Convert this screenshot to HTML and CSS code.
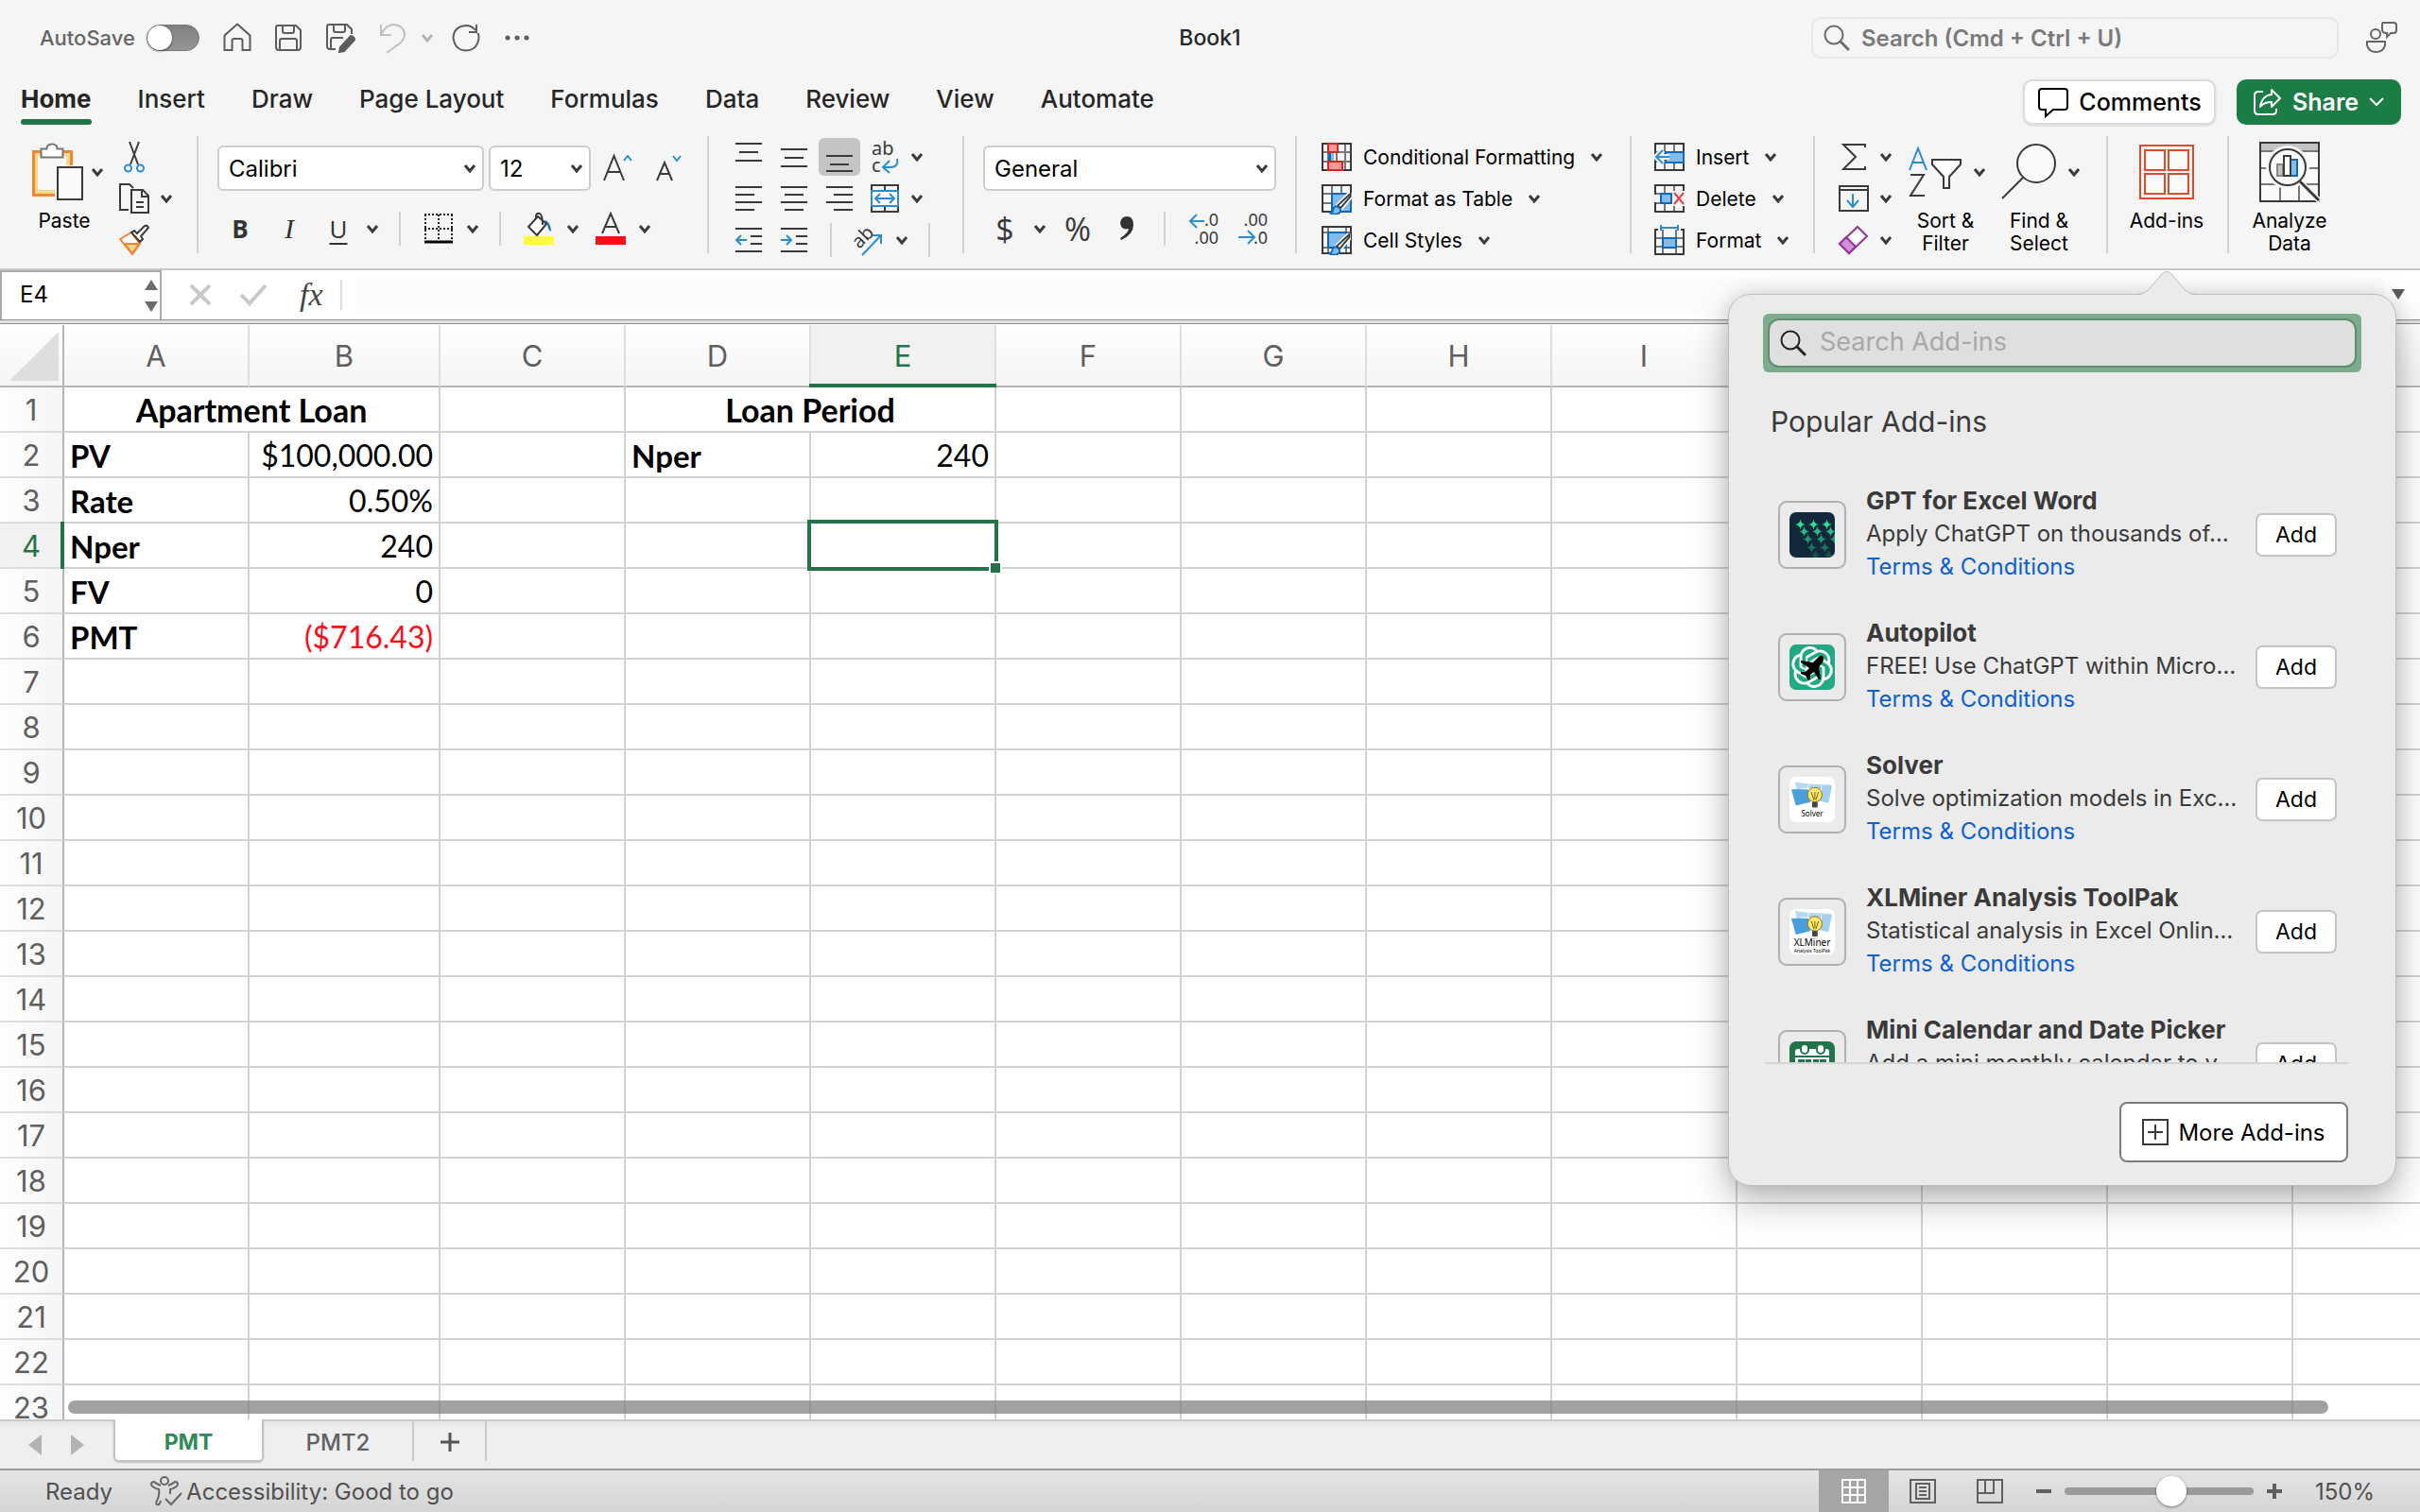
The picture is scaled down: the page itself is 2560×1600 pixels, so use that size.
FILE: index.html
```html
<!DOCTYPE html>
<html lang="en">
<head>
<meta charset="utf-8">
<title>Book1</title>
<link rel="stylesheet" href="styles.css">
</head>
<body>
<svg class="defs" aria-hidden="true">
  <symbol id="chev" viewBox="0 0 14 10"><path d="M2 2l5 6 5-6" fill="none" stroke="currentColor" stroke-width="3"/></symbol>
  <symbol id="lens" viewBox="0 0 28 28"><circle cx="11" cy="11" r="9.500" fill="none" stroke="currentColor" stroke-width="2"/><path d="M18 18l8 8" stroke="currentColor" stroke-width="3" stroke-linecap="round"/></symbol>
  <symbol id="star" viewBox="0 0 12 12"><path d="M6 0q.6 5.400 6 6-5.400.6-6 6-.6-5.400-6-6 5.400-.6 6-6z"/></symbol>
  <symbol id="brush" viewBox="0 0 24 24"><path d="M23 1L10 14l-2 4 4-1L23 4z" fill="#fafafa" stroke="#f5f5f5" stroke-width="6"/><path d="M23 1L9 14l3 3L23 4z" fill="#fafafa" stroke="#3a3a3a" stroke-width="2"/><path d="M8 15q-4 0-4 4-1 3-4 3 8 4 12-1 1-4-4-6z" fill="#83bceb" stroke="#1068b8" stroke-width="2"/></symbol>
  <symbol id="bulb" viewBox="0 0 48 30"><path d="M5 1l17 2 23 1-1 5-37 0z" fill="#b5d9f4"/><path d="M20 6l26-1-4 19-19-4z" fill="#a4cff1"/><path d="M1 9l19 0 2 14-16 4z" fill="#4a9edb"/><path d="M20 3l-1 6M34 5v6M12 8l12 1" stroke="#fff"/><circle cx="27" cy="15" r="8" fill="#ffe96b" stroke="#8a7518"/><path d="M23 12l3 9M31 12l-3 9M27 12v8" stroke="#6b5a16"/><path d="M24 23h6v6h-6z" fill="#444"/></symbol>
</svg>

<header class="top">
  <div class="titlebar">
    <div class="quick">
      <label class="autosave">AutoSave <input type="checkbox" role="switch"></label>
      <button aria-label="Home"><svg width="32" height="32" viewBox="0 0 32 32"><path d="M2.500 29V13.500L16 1.500l13.500 12V29h-8V19q0-2-2-2h-7q-2 0-2 2v10z"/></svg></button>
      <button aria-label="Save"><svg width="32" height="32" viewBox="0 0 32 32"><path d="M5 3h19l5 5v18q0 3-3 3H6q-3 0-3-3V5q0-2 2-2zM10 3v6q0 2 2 2h8q2 0 2-2V3M7 29V19q0-2 2-2h14q2 0 2 2v10"/></svg></button>
      <button aria-label="Save as"><svg width="34" height="34" viewBox="0 0 34 34"><path d="M12 29H6q-3 0-3-3V5q0-2 2-2h19l5 5v5M10 3v6q0 2 2 2h8q2 0 2-2V3M7 29V19q0-2 2-2h11"/><path d="M28 15q4 1 4 4L21 31l-5 1 1-5z" fill="currentColor"/></svg></button>
      <span class="undo"><button aria-label="Undo" disabled><svg width="32" height="32" viewBox="0 0 32 32"><path d="M4 2v11h11M4 13Q9 2 18 2q10 1 11 10 0 5-4 9L10 32"/></svg></button><button aria-label="Undo list" disabled><svg class="chev"><use href="#chev"/></svg></button></span>
      <button aria-label="Redo"><svg width="32" height="32" viewBox="0 0 32 32"><path d="M27 2v8h-8M26 8Q22 3 16 3 3 4 2.500 16 4 29 16 29.500 28 29 29.500 16q0-3-1-5"/></svg></button>
      <button aria-label="More"><svg width="32" height="32" viewBox="0 0 32 32"><g class="solid"><circle cx="6" cy="16" r="2.500"/><circle cx="16" cy="16" r="2.500"/><circle cx="26" cy="16" r="2.500"/></g></svg></button>
    </div>
    <h1>Book1</h1>
    <div class="find">
      <label class="search"><svg width="28" height="28"><use href="#lens"/></svg><input type="text" placeholder="Search (Cmd + Ctrl + U)" aria-label="Search"></label>
      <button aria-label="Contact"><svg width="34" height="34" viewBox="0 0 34 34"><circle cx="11" cy="13" r="5"/><path d="M2 21h19v4q-2 7-9.500 7T2 25zM19 1h11q3 0 3 3v5q0 3-3 3h-3l-4 4v-4h-1q-4 0-4-4V3q0-2 1-2z"/></svg></button>
    </div>
  </div>

  <div class="tabrow">
    <nav class="tabs">
      <a href="#" class="on">Home</a><a href="#">Insert</a><a href="#">Draw</a><a href="#">Page Layout</a><a href="#">Formulas</a><a href="#">Data</a><a href="#">Review</a><a href="#">View</a><a href="#">Automate</a>
    </nav>
    <button class="comments"><svg width="34" height="34" viewBox="0 0 34 34"><path d="M5 3h24q3 0 3 3v16q0 3-3 3H17l-8 7v-7H5q-3 0-3-3V6q0-3 3-3z" fill="none" stroke="#000" stroke-width="2"/></svg>Comments</button>
    <button class="share"><svg width="32" height="32" viewBox="0 0 32 32"><path d="M11 5H6Q2 5 2 9v16q0 4 4 4h15q4 0 4-4v-2M20 3l9 9-9 9v-5q-8 0-12 5 2-12 12-13z" fill="none" stroke="#fff" stroke-width="2" stroke-linejoin="round"/></svg>Share<svg width="18" height="12" viewBox="0 0 18 12"><path d="M2 2l7 7 7-7" fill="none" stroke="#fff" stroke-width="2"/></svg></button>
  </div>

  <div class="ribbon">
    <section class="group g-clip">
      <button class="tall"><span class="pic"><svg width="54" height="62" viewBox="0 0 54 62"><path d="M1.500 9.500h40v46h-40z" fill="#f8d88e" stroke="#ed8733" stroke-width="3"/><path d="M6 14h30v36H6z" fill="#f7f7f7"/><path d="M9.500 6.500h6q0-5 5.500-5t5.500 5h6v9h-23z" fill="#fff" stroke="#777" stroke-width="2"/><path d="M24 24h30v38H24z" fill="#f5f5f5"/><path d="M27 26h26v34H27z" fill="#fafafa" stroke="#3a3a3a" stroke-width="2"/></svg><svg class="chev"><use href="#chev"/></svg></span>Paste</button>
      <div class="stack">
        <button aria-label="Cut"><svg width="32" height="34" viewBox="0 0 32 34"><path d="M11 1l9 24M21 1l-9 24" stroke="#3a3a3a" stroke-width="2"/><g fill="none" stroke="#2a8dd2" stroke-width="2"><circle cx="9.500" cy="29" r="3.500"/><circle cx="22.500" cy="29" r="3.500"/></g></svg></button>
        <span><button aria-label="Copy"><svg width="32" height="32" viewBox="0 0 32 32"><path d="M10 28H1V1h10l4 4M13 7h12l6 6v18H13zM24 7v7h7M18 20h8M18 25h8" fill="none" stroke="#3a3a3a" stroke-width="2"/></svg></button><button class="more" aria-label="Copy options"><svg class="chev"><use href="#chev"/></svg></button></span>
        <button aria-label="Format painter"><svg width="32" height="32" viewBox="0 0 32 32"><path d="M1 15l12-7 9 12-8 11z" fill="#fff" stroke="#ed8733" stroke-width="2"/><path d="M6 20l15 0-7 10z" fill="#f8d88e" stroke="#ed8733" stroke-width="2"/><path d="M13 8l3-2 3 3 8-8q3-1 4 2l-8 9 2 3-3 3z" fill="#fff" stroke="#3a3a3a" stroke-width="2"/></svg></button>
      </div>
    </section>
    <i class="sep"></i>
    <section class="group g-font rows">
      <div class="row">
        <label class="pick face"><select aria-label="Font"><option>Calibri</option></select><svg class="chev"><use href="#chev"/></svg></label>
        <label class="pick size"><select aria-label="Font size"><option>12</option></select><svg class="chev"><use href="#chev"/></svg></label>
        <button class="grow" aria-label="Grow font"><svg width="32" height="32" viewBox="0 0 32 32"><path d="M1 29L11.500 3 22 29M5 20h13" fill="none" stroke="#3a3a3a" stroke-width="2"/><path d="M22 8l4-5 4 5" fill="none" stroke="#2a8dd2" stroke-width="2"/></svg></button>
        <button aria-label="Shrink font"><svg width="32" height="32" viewBox="0 0 32 32"><path d="M4 29l8-19 8 19M7 22h10" fill="none" stroke="#3a3a3a" stroke-width="2"/><path d="M21 3l4 5 4-5" fill="none" stroke="#2a8dd2" stroke-width="2"/></svg></button>
      </div>
      <div class="row low">
        <button class="bold letter">B</button><button class="ital letter">I</button><button class="under letter">U</button><button class="more" aria-label="Underline options"><svg class="chev"><use href="#chev"/></svg></button>
        <i class="sep mini"></i>
        <button aria-label="Borders"><svg width="32" height="32" viewBox="0 0 32 32"><path d="M1 1h30M1 16h30M2 1v28M16 1v28M30 1v28" stroke="#222" stroke-width="2" stroke-dasharray="2 2" fill="none"/><path d="M1 30h30" stroke="#000" stroke-width="3"/></svg></button><button class="more" aria-label="Border options"><svg class="chev"><use href="#chev"/></svg></button>
        <i class="sep mini"></i>
        <button aria-label="Fill colour"><svg width="32" height="34" viewBox="0 0 32 34"><path d="M0 25h32v9H0z" fill="#fffb3a"/><path d="M15 4L5 15l9 9 10-12zM13 6q-1-6 4-5 3 2 3 12" fill="#fff" stroke="#3a3a3a" stroke-width="2"/><path d="M21 8q7 0 8 12-3-1-4-8z" fill="#1068b8"/></svg></button><button class="more" aria-label="Fill options"><svg class="chev"><use href="#chev"/></svg></button>
        <button class="ink" aria-label="Font colour"><svg width="32" height="34" viewBox="0 0 32 34"><path d="M0 25h32v9H0z" fill="#fc0d1b"/><path d="M7 22l9-21 9 21M10 15h12" fill="none" stroke="#3a3a3a" stroke-width="2"/></svg></button><button class="more" aria-label="Font colour options"><svg class="chev"><use href="#chev"/></svg></button>
      </div>
    </section>
    <i class="sep"></i>
    <section class="group g-align rows">
      <div class="row line"><button aria-label="Top align"><svg class="ln" viewBox="0 0 28 32"><path d="M0 2h28M4 11h20M0 20h28"/></svg></button><button aria-label="Middle align"><svg class="ln" viewBox="0 0 28 32"><path d="M0 8h28M4 17h20M0 26h28"/></svg></button><button class="on" aria-label="Bottom align"><svg class="ln" viewBox="0 0 28 32"><path d="M0 15h28M4 24h20M0 31h28"/></svg></button><button aria-label="Wrap text"><svg width="32" height="36" viewBox="0 0 32 36"><text font-size="20"><tspan x="2" y="16">ab</tspan><tspan x="2" y="34">c</tspan></text><path d="M29 20q2 9-8 9h-6M21 22l-7 7 7 6" fill="none" stroke="#2a8dd2" stroke-width="2"/></svg></button><button class="more" aria-label="Wrap options"><svg class="chev"><use href="#chev"/></svg></button></div>
      <div class="row line"><button aria-label="Align left"><svg class="ln" viewBox="0 0 28 32"><path d="M0 4h28M0 12h20M0 20h28M0 28h20"/></svg></button><button aria-label="Centre"><svg class="ln" viewBox="0 0 28 32"><path d="M0 4h28M4 12h20M0 20h28M4 28h20"/></svg></button><button aria-label="Align right"><svg class="ln" viewBox="0 0 28 32"><path d="M0 4h28M8 12h20M0 20h28M8 28h20"/></svg></button><button aria-label="Merge"><svg width="32" height="32" viewBox="0 0 32 32"><path d="M2 2h28v28H2zM16 2v5M16 25v5" fill="none" stroke="#3a3a3a" stroke-width="2"/><path d="M2 8h28v16H2z" fill="#fff" stroke="#2a8dd2" stroke-width="2"/><path d="M6 16h20M11 11l-5 5 5 5M21 11l5 5-5 5" fill="none" stroke="#2a8dd2" stroke-width="2"/></svg></button><button class="more" aria-label="Merge options"><svg class="chev"><use href="#chev"/></svg></button></div>
      <div class="row line"><button aria-label="Decrease indent"><svg class="ln" viewBox="0 0 28 32"><path d="M0 4h28M16 12h12M16 20h12M0 28h28"/><path class="blue" d="M12 16H1M6 11l-5 5 5 5"/></svg></button><button aria-label="Increase indent"><svg class="ln" viewBox="0 0 28 32"><path d="M0 4h28M16 12h12M16 20h12M0 28h28"/><path class="blue" d="M0 16h11M6 11l5 5-5 5"/></svg></button><i class="sep mini tight"></i><button class="slant" aria-label="Orientation"><svg width="36" height="36" viewBox="0 0 36 36"><text transform="translate(9 28) rotate(-45)" font-size="20">ab</text><path d="M12 34L32 13M23 13h9v9" fill="none" stroke="#2a8dd2" stroke-width="2"/></svg></button><button class="more slim" aria-label="Orientation options"><svg class="chev"><use href="#chev"/></svg></button><i class="sep mini last"></i></div>
    </section>
    <i class="sep"></i>
    <section class="group g-num rows">
      <div class="row"><label class="pick fmt"><select aria-label="Number format"><option>General</option></select><svg class="chev"><use href="#chev"/></svg></label></div>
      <div class="row low">
        <button class="sym">$</button><button class="more" aria-label="Currency options"><svg class="chev"><use href="#chev"/></svg></button><button class="sym pct">%</button><button class="com" aria-label="Comma style"><svg width="20" height="28" viewBox="0 0 20 28"><path d="M10 1q7 0 7 9 0 10-13 16l-1-2q8-5 9-10-8 2-9-6 1-7 7-7z" fill="#333"/></svg></button>
        <i class="sep mini"></i>
        <button aria-label="Increase decimal"><svg width="34" height="36" viewBox="0 0 34 36"><text font-size="18" text-anchor="end"><tspan x="32" y="15">.0</tspan><tspan x="32" y="34">.00</tspan></text><path d="M17 10H2M9 3l-7 7 7 7" fill="none" stroke="#2a8dd2" stroke-width="2"/></svg></button>
        <button class="dec" aria-label="Decrease decimal"><svg width="34" height="36" viewBox="0 0 34 36"><text font-size="18" text-anchor="end"><tspan x="32" y="15">.00</tspan><tspan x="32" y="34">.0</tspan></text><path d="M1 27h17M11 20l7 7-7 7" fill="none" stroke="#2a8dd2" stroke-width="2"/></svg></button>
      </div>
    </section>
    <i class="sep"></i>
    <section class="group g-style rows">
      <button class="item"><svg class="cell" viewBox="0 0 32 30"><path class="g" d="M7 1v28M16 1v28M25 1v28M1 10h30M1 20h30"/><path class="k" d="M1 1h30v28H1z"/><path d="M7 1h10v9H7zM7 20h15v9H7z" fill="#ff9999" stroke="#d8251d" stroke-width="2"/><path d="M7 11h6v8H7z" fill="#83bceb"/><path d="M7 11h3v8H7z" fill="#1068b8"/></svg>Conditional Formatting<svg class="chev"><use href="#chev"/></svg></button>
      <button class="item"><svg class="cell" viewBox="0 0 32 30"><path class="g" d="M11 1v28M21 1v28M1 10h30M1 20h30"/><path class="k" d="M1 1h30v28H1z"/><path d="M11 10h20v19H11z" fill="#83bceb" stroke="#1068b8" stroke-width="2"/><use href="#brush" x="8" y="9" width="24" height="23"/></svg>Format as Table<svg class="chev"><use href="#chev"/></svg></button>
      <button class="item"><svg class="cell" viewBox="0 0 32 30"><path class="g" d="M7 1v28M26 1v28M1 7h30M1 23h30"/><path class="k" d="M1 1h30v28H1z"/><path d="M7 7h19v16H7z" fill="#83bceb" stroke="#1068b8" stroke-width="2"/><use href="#brush" x="7" y="8" width="24" height="23"/></svg>Cell Styles<svg class="chev"><use href="#chev"/></svg></button>
    </section>
    <i class="sep"></i>
    <section class="group g-cells rows">
      <button class="item"><svg class="cell" viewBox="0 0 32 30"><path class="g" d="M11 1v28M21 1v28M1 10h30M1 20h30"/><path class="k" d="M1 1h30v28H1z"/><path d="M12 10h19v11H12z" fill="#83bceb" stroke="#1068b8" stroke-width="2"/><path d="M16 15H3M9 8l-7 7 7 7" fill="none" stroke="#f5f5f5" stroke-width="6"/><path d="M16 15H2M9 8l-7 7 7 7" fill="none" stroke="#2a8dd2" stroke-width="2"/></svg>Insert<svg class="chev"><use href="#chev"/></svg></button>
      <button class="item"><svg class="cell" viewBox="0 0 32 30"><path class="g" d="M11 1v28M21 1v28M1 10h30M1 20h30"/><path class="k" d="M1 1h30v28H1z"/><path d="M0 11h5v8H0z" fill="#f5f5f5"/><path d="M7 10h11v10H7z" fill="#83bceb" stroke="#1068b8" stroke-width="2"/><path d="M19 7h13v16H19z" fill="#f5f5f5"/><path d="M21 9l10 12M31 9L21 21" stroke="#e8393c" stroke-width="2"/></svg>Delete<svg class="chev"><use href="#chev"/></svg></button>
      <button class="item"><svg class="cell" viewBox="0 0 32 32"><path class="g" d="M9 5v26M23 5v26M1 14h30M1 23h30"/><path class="k" d="M4 5H1v26h30V5h-3"/><path d="M9 14h14v10H9z" fill="#83bceb" stroke="#1068b8" stroke-width="2"/><path d="M7 3h18M7 0v6M25 0v6" stroke="#2a8dd2" stroke-width="2"/></svg>Format<svg class="chev"><use href="#chev"/></svg></button>
    </section>
    <i class="sep"></i>
    <section class="group g-edit">
      <div class="stack">
        <span><button aria-label="AutoSum"><svg width="32" height="32" viewBox="0 0 32 32"><path d="M28 6V3H5l13 13L5 29h23v-3" fill="none" stroke="#3a3a3a" stroke-width="2"/></svg></button><button class="more" aria-label="Sum options"><svg class="chev"><use href="#chev"/></svg></button></span>
        <span><button aria-label="Fill"><svg width="32" height="32" viewBox="0 0 32 32"><path d="M1 3h30v26H1zM1 7h30" fill="none" stroke="#3a3a3a" stroke-width="2"/><path d="M15 11v14M9 18l6 7 6-7" fill="none" stroke="#2a8dd2" stroke-width="2"/></svg></button><button class="more" aria-label="Fill options"><svg class="chev"><use href="#chev"/></svg></button></span>
        <span><button aria-label="Clear"><svg width="32" height="32" viewBox="0 0 32 32"><path d="M20 2l10 10-19 18L1 20z" fill="#fafafa" stroke="#94329c" stroke-width="2"/><path d="M8 13l10 10-7 7L1 20z" fill="#d190d6" stroke="#94329c" stroke-width="2"/></svg></button><button class="more" aria-label="Clear options"><svg class="chev"><use href="#chev"/></svg></button></span>
      </div>
      <button class="tall sort"><span class="pic"><svg width="56" height="56" viewBox="0 0 56 56"><path d="M1 26L10 3l9 23M4 18h12" fill="none" stroke="#2a8dd2" stroke-width="2"/><path d="M2 31h14L2 53h15" fill="none" stroke="#3a3a3a" stroke-width="2"/><path d="M25 15h30v5L43 33v12h-6V33L25 20z" fill="#fff" stroke="#3a3a3a" stroke-width="2"/></svg><svg class="chev"><use href="#chev"/></svg></span>Sort &amp;<br>Filter</button>
      <button class="tall"><span class="pic"><svg width="58" height="60" viewBox="0 0 58 60"><circle cx="37" cy="21" r="20" fill="#fafafa" stroke="#3a3a3a" stroke-width="2"/><path d="M23 36L1 58" stroke="#3a3a3a" stroke-width="2"/></svg><svg class="chev"><use href="#chev"/></svg></span>Find &amp;<br>Select</button>
    </section>
    <i class="sep"></i>
    <section class="group g-add">
      <button class="tall mid"><span class="pic"><svg width="58" height="58" viewBox="0 0 58 58"><g fill="none" stroke="#e0492a" stroke-width="2"><path d="M1 1h56v56H1z"/><path d="M6 6h21v21H6zM31 6h21v21H31zM6 31h21v21H6zM31 31h21v21H31z" fill="#fafafa"/></g></svg></span>Add-ins</button>
    </section>
    <i class="sep"></i>
    <section class="group g-data">
      <button class="tall mid"><span class="pic"><svg width="64" height="64" viewBox="0 0 64 64"><path d="M1 1h62v62H1z" fill="#fafafa"/><path d="M1 1h62v9H1z" fill="#c3c3c3"/><path d="M1 10h62M1 28h62M1 45h62M22 45v18M42 45v18" stroke="#777" stroke-width="2"/><path d="M1 1h62v62H1z" fill="none" stroke="#3a3a3a" stroke-width="2"/><circle cx="30" cy="27" r="23" fill="#f5f5f5"/><path d="M44 43l20 20" stroke="#f5f5f5" stroke-width="6"/><circle cx="30" cy="27" r="19" fill="#fafafa" stroke="#3a3a3a" stroke-width="2"/><path d="M19 24h6v12h-6z" fill="#c3c3c3" stroke="#888" stroke-width="2"/><path d="M33 19h7v17h-7z" fill="#83bceb" stroke="#1068b8" stroke-width="2"/><path d="M26 15h7v21h-7z" fill="#fff" stroke="#3a3a3a" stroke-width="2"/><path d="M43 42l20 20" stroke="#3a3a3a" stroke-width="3"/></svg></span>Analyze<br>Data</button>
    </section>
  </div>

  <div class="formula">
    <div class="namebox"><input type="text" value="E4" aria-label="Name box"><svg width="14" height="36" viewBox="0 0 14 36"><path d="M7 1l7 11H0zM7 35l7-11H0z" fill="#6b6b6b"/></svg></div>
    <button aria-label="Cancel"><svg width="26" height="26" viewBox="0 0 26 26"><path d="M3 3l20 20M23 3L3 23" stroke="#c9c9c9" stroke-width="4"/></svg></button>
    <button aria-label="Enter"><svg width="30" height="26" viewBox="0 0 30 26"><path d="M2 13l9 9L28 3" fill="none" stroke="#c9c9c9" stroke-width="4"/></svg></button>
    <button class="fx">fx</button>
    <i class="sep"></i>
    <input class="entry" type="text" aria-label="Formula">
    <button class="expand" aria-label="Expand"><svg width="14" height="12" viewBox="0 0 14 12"><path d="M0 0h14L7 11z" fill="#5c5c5c"/></svg></button>
  </div>
</header>

<main class="sheet">
  <table>
    <colgroup id="cols"></colgroup>
    <thead><tr id="letters"></tr></thead>
    <tbody id="cells"></tbody>
  </table>
  <div class="scrollbar"></div>
</main>

<footer>
  <div class="sheets">
    <button class="nav" aria-label="Previous sheet"><svg width="14" height="22" viewBox="0 0 14 22"><path d="M14 0v22L0 11z"/></svg></button>
    <button class="nav" aria-label="Next sheet"><svg width="14" height="22" viewBox="0 0 14 22"><path d="M0 0v22l14-11z"/></svg></button>
    <button class="sheet-tab on">PMT</button>
    <button class="sheet-tab">PMT2</button>
    <button class="plus" aria-label="New sheet"><svg width="20" height="20" viewBox="0 0 20 20"><path d="M10 0v20M0 10h20" stroke="#555" stroke-width="3"/></svg></button>
  </div>
  <div class="status">
    <span>Ready</span>
    <button class="access"><svg width="34" height="32" viewBox="0 0 34 32"><g fill="none" stroke="#666" stroke-width="2"><circle cx="15" cy="5" r="4"/><path d="M11 10Q6 8 4 6 1 6 1 9q1 3 8 5 1 4-1 10-3 5-1 6 3 1 4-4M19 10q5-2 7-4 3 0 3 3-1 3-8 5v5M16 24l6 6L33 18"/></g></svg>Accessibility: Good to go</button>
    <div class="views">
      <button class="on" aria-label="Normal"><svg width="28" height="28" viewBox="0 0 28 28"><path d="M2 2h24v24H2zM10 2v24M18 2v24M2 10h24M2 18h24" fill="none" stroke="#fff" stroke-width="2"/></svg></button>
      <button aria-label="Page layout"><svg width="28" height="28" viewBox="0 0 28 28"><path d="M1 2h26v24H1zM7 6h14v16H7zM10 10h8M10 14h8M10 18h8" fill="none" stroke="#606060" stroke-width="2"/></svg></button>
      <button aria-label="Page break"><svg width="28" height="28" viewBox="0 0 28 28"><path d="M1 2h26v24H1zM1 16h17V2M9 2v14" fill="none" stroke="#606060" stroke-width="2"/></svg></button>
      <button class="step" aria-label="Zoom out"><svg width="16" height="16" viewBox="0 0 16 16"><path d="M0 8h16" stroke="#606060" stroke-width="4"/></svg></button>
      <input type="range" min="0" max="100" value="58" aria-label="Zoom">
      <button class="step" aria-label="Zoom in"><svg width="16" height="16" viewBox="0 0 16 16"><path d="M0 8h16M8 0v16" stroke="#606060" stroke-width="4"/></svg></button>
      <span class="pctg">150%</span>
    </div>
  </div>
</footer>

<aside class="popover">
  <svg class="arrow" width="60" height="26" viewBox="0 0 60 26"><path d="M0 26V25Q8 25 13 17L25 3q5-5 10 0l12 14q5 8 13 8v1z" fill="#ebebeb"/><path d="M0 24Q8 24 13 17L25 3q5-5 10 0l12 14q5 7 13 7" fill="none" stroke="#bdbdbd"/></svg>
  <div class="ring"><label class="addsearch"><svg width="28" height="28"><use href="#lens"/></svg><input type="text" placeholder="Search Add-ins" aria-label="Search Add-ins"></label></div>
  <h2>Popular Add-ins</h2>
  <ul>
    <li><span class="logo"><svg width="48" height="48" viewBox="0 0 48 48"><clipPath id="r"><rect width="48" height="48" rx="7"/></clipPath><g clip-path="url(#r)"><path d="M0 0h48v48H0z" fill="#14283b"/><g fill="#2ae394"><use href="#star" x="6" y="6" width="11" height="14"/><use href="#star" x="20" y="6" width="11" height="14"/><use href="#star" x="34" y="6" width="11" height="14"/></g><g fill="#25bf83"><use href="#star" x="10" y="14" width="11" height="13"/><use href="#star" x="24" y="14" width="11" height="13"/><use href="#star" x="38" y="14" width="11" height="13"/></g><g fill="#1f9a70"><use href="#star" x="14" y="22" width="11" height="13"/><use href="#star" x="28" y="22" width="11" height="13"/><use href="#star" x="42" y="22" width="11" height="13"/></g><g fill="#1b765e"><use href="#star" x="18" y="31" width="11" height="13"/><use href="#star" x="32" y="31" width="11" height="13"/></g><g fill="#18534c"><use href="#star" x="22" y="39" width="11" height="13"/><use href="#star" x="36" y="39" width="11" height="13"/></g></g></svg></span><div class="info"><h3>GPT for Excel Word</h3><p>Apply ChatGPT on thousands of…</p><a href="#">Terms &amp; Conditions</a></div><button>Add</button></li>
    <li><span class="logo"><svg width="48" height="48" viewBox="0 0 48 48"><rect width="48" height="48" rx="7" fill="#21a884"/><g transform="translate(2 2) scale(1.830)" fill="#fff"><path d="M22.282 9.821a5.985 5.985 0 0 0-.516-4.911 6.046 6.046 0 0 0-6.510-2.900A6.065 6.065 0 0 0 4.981 4.182a5.985 5.985 0 0 0-3.998 2.900 6.046 6.046 0 0 0 .743 7.097 5.980 5.980 0 0 0 .511 4.911 6.051 6.051 0 0 0 6.515 2.900A5.985 5.985 0 0 0 13.260 24a6.056 6.056 0 0 0 5.772-4.206 5.989 5.989 0 0 0 3.998-2.900 6.056 6.056 0 0 0-.748-7.073zm-9.022 12.608a4.476 4.476 0 0 1-2.876-1.041l.142-.080 4.778-2.758a.795.795 0 0 0 .393-.681v-6.737l2.020 1.169a.071.071 0 0 1 .038.052v5.583a4.504 4.504 0 0 1-4.495 4.494zm-9.661-4.125a4.471 4.471 0 0 1-.535-3.014l.142.085 4.783 2.758a.771.771 0 0 0 .781 0l5.843-3.369v2.332a.080.080 0 0 1-.033.062L9.740 19.950a4.499 4.499 0 0 1-6.141-1.646zM2.341 7.896a4.485 4.485 0 0 1 2.366-1.973V11.600a.766.766 0 0 0 .388.677l5.814 3.354-2.020 1.169a.076.076 0 0 1-.071 0l-4.830-2.787A4.504 4.504 0 0 1 2.341 7.872zm16.596 3.856L13.104 8.364 15.119 7.200a.076.076 0 0 1 .071 0l4.830 2.791a4.494 4.494 0 0 1-.677 8.104v-5.677a.790.790 0 0 0-.407-.667zm2.011-3.023l-.142-.085-4.774-2.782a.776.776 0 0 0-.785 0L9.409 9.230V6.897a.066.066 0 0 1 .028-.062l4.830-2.787a4.499 4.499 0 0 1 6.680 4.660zM8.307 12.863l-2.020-1.164a.080.080 0 0 1-.038-.057V6.074a4.499 4.499 0 0 1 7.376-3.454l-.142.081L8.704 5.459a.795.795 0 0 0-.393.681z"/></g><path d="M35 12q-3-1-6 3l-4 4-13-2v2l9 6-4 4-5 0v2l5 2 3 5 2-1v-5l4-3 5 8h2l-2-13 4-5q2-4 0-7z"/></svg></span><div class="info"><h3>Autopilot</h3><p>FREE! Use ChatGPT within Micro…</p><a href="#">Terms &amp; Conditions</a></div><button>Add</button></li>
    <li><span class="logo"><svg width="48" height="48" viewBox="0 0 48 48"><rect width="48" height="48" rx="7" fill="#fff"/><use href="#bulb" x="1" y="4" width="46" height="30"/><text class="tag" x="24" y="42" font-size="8" text-anchor="middle">Solver</text></svg></span><div class="info"><h3>Solver</h3><p>Solve optimization models in Exc…</p><a href="#">Terms &amp; Conditions</a></div><button>Add</button></li>
    <li><span class="logo"><svg width="48" height="48" viewBox="0 0 48 48"><rect width="48" height="48" rx="7" fill="#fff"/><use href="#bulb" x="1" y="1" width="46" height="29"/><text class="tag" font-size="10" text-anchor="middle"><tspan x="24" y="39">XLMiner</tspan><tspan x="24" y="46" font-size="5">Analysis ToolPak</tspan></text></svg></span><div class="info"><h3>XLMiner Analysis ToolPak</h3><p>Statistical analysis in Excel Onlin…</p><a href="#">Terms &amp; Conditions</a></div><button>Add</button></li>
    <li><span class="logo"><svg width="48" height="48" viewBox="0 0 48 48"><rect width="48" height="48" rx="7" fill="#22744a"/><path d="M6 15V11q0-3 3-3h30q3 0 3 3v4zM6 17h36v25H6z" fill="#fff"/><path d="M9 19h7v6H9zM17 19h6v6h-6zM25 19h6v6h-6zM32 19h7v6h-7z" fill="#22744a"/><g fill="#fff" stroke="#22744a" stroke-width="2"><rect x="12" y="3" width="8" height="10" rx="4"/><rect x="29" y="3" width="8" height="10" rx="4"/></g></svg></span><div class="info"><h3>Mini Calendar and Date Picker</h3><p>Add a mini monthly calendar to y…</p><a href="#">Terms &amp; Conditions</a></div><button>Add</button></li>
  </ul>
  <button class="more-add"><svg width="28" height="28" viewBox="0 0 28 28"><path d="M1 1h26v26H1zM14 6v16M6 14h16" fill="none" stroke="#3a3a3a" stroke-width="2"/></svg>More Add-ins</button>
</aside>
<script src="sheet.js"></script>
</body>
</html>
```
FILE: styles.css
```css
*, *::before, *::after { box-sizing: border-box; }
body {
  margin: 0;
  height: 100vh;
  display: flex;
  flex-direction: column;
  position: relative;
  overflow: hidden;
  font-family: Inter, "Liberation Sans", sans-serif;
  color: #262626;
  background: #fff;
}
button, input, select { font: inherit; color: inherit; }
button {
  border: 0;
  padding: 0;
  background: none;
  display: flex;
  align-items: center;
  justify-content: center;
}
input, select { border: 0; outline: 0; background: none; padding: 0; min-width: 0; }
h1, h2, h3, p, ul { margin: 0; padding: 0; font-weight: 400; list-style: none; }
a { color: inherit; text-decoration: none; }
svg { flex: none; display: block; overflow: visible; }
svg text { font-family: "Noto Sans", sans-serif; fill: #3a3a3a; }
svg .tag { fill: #000; }
.defs { position: absolute; width: 0; height: 0; overflow: hidden; }
.chev { width: 14px; height: 10px; color: #3a3a3a; }

/* Title bar */
.top { background: #f5f5f5; flex: none; }
.titlebar {
  height: 80px;
  display: grid;
  grid-template-columns: 1fr auto 1fr;
  align-items: center;
  padding: 0 24px 0 42px;
}
.quick { display: flex; align-items: center; gap: 22px; color: #5c5c5c; }
.quick svg, .find button svg { fill: none; stroke: currentColor; stroke-width: 2; }
.quick .solid { fill: #5c5c5c; stroke: none; }
.autosave { display: flex; align-items: center; gap: 12px; font-size: 22px; font-weight: 500; color: #666; }
.autosave input {
  appearance: none;
  margin: 0 2px 0 0;
  width: 56px;
  height: 28px;
  border-radius: 14px;
  background: linear-gradient(#808080, #969696);
  border: 1px solid #777;
}
.autosave input::before {
  content: "";
  display: block;
  width: 26px;
  height: 26px;
  border-radius: 50%;
  background: #fff;
  box-shadow: 0 1px 3px #0008;
}
.undo { display: flex; gap: 14px; margin-right: -4px; color: #c0c0c0; }
.undo button { color: #c0c0c0; }
.undo .chev { color: #b4b4b4; }
h1 { font-size: 23px; font-weight: 500; padding-right: 18px; }
.find { display: flex; align-items: center; justify-content: flex-end; gap: 28px; color: #666; }
.search {
  width: 558px;
  height: 44px;
  border: 2px solid #e6e6e6;
  border-radius: 10px;
  display: flex;
  align-items: center;
  gap: 12px;
  padding: 0 11px;
  color: #6c6c6c;
}
.search input { flex: 1; font-size: 24px; font-weight: 600; }
.search input::placeholder { color: #7a7a7a; opacity: 1; }

/* Ribbon tabs */
.tabrow { display: flex; align-items: center; padding: 4px 20px 12px 22px; gap: 22px; }
.tabs { flex: 1; display: flex; gap: 49px; font-size: 26px; font-weight: 500; }
.tabs a { line-height: 42px; border-bottom: 6px solid transparent; }
.tabs .on { font-weight: 700; position: relative; }
.tabs .on::after {
  content: "";
  position: absolute;
  left: 0;
  right: 0;
  bottom: -6px;
  height: 6px;
  border-radius: 3px;
  background: #227447;
}
.comments, .share { height: 48px; border-radius: 10px; font-size: 25px; font-weight: 500; }
.comments {
  width: 204px;
  gap: 10px;
  background: #fff;
  color: #000;
  border: 2px solid #dcdcdc;
  box-shadow: 0 1px 3px #0002;
}
.share { width: 174px; gap: 10px; background: #1b7d45; color: #fff; font-weight: 600; }

/* Ribbon */
.ribbon { display: flex; height: 142px; border-bottom: 2px solid #c8c8c8; color: #000; }
.group { flex: none; display: flex; height: 132px; }
.rows { flex-direction: column; }
.row { display: flex; align-items: center; height: 68px; }
.row.low { height: 64px; padding-bottom: 4px; }
.row.line { height: 44px; }
.sep { flex: none; width: 2px; height: 124px; background: #d2d2d2; }
.sep.mini { height: 36px; margin: 0 24px 0 8px; }
.more { width: 40px; height: 32px; }
.stack { display: grid; grid-template-rows: repeat(3, 44px); justify-items: start; align-items: center; }
.stack span { display: flex; }
.tall { flex-direction: column; justify-content: flex-start; padding-right: 18px; font-size: 21px; line-height: 24px; }
.pic { display: flex; align-items: center; gap: 8px; height: 76px; margin: 0 -18px 2px 0; padding-right: 10px; }
.g-edit .pic { gap: 12px; padding-right: 14px; }
.tall.mid { padding: 0; }
.mid .pic { margin-right: 0; padding: 0; }
.g-clip { width: 208px; padding-left: 34px; }
.g-clip .stack { margin-left: 6px; }
.g-clip .more, .g-edit .more { width: 36px; }
.g-font { width: 538px; }
.g-font .row { padding-left: 20px; gap: 5px; }
.g-font .low { padding-left: 28px; gap: 0; }
.pick { display: grid; height: 48px; align-items: center; justify-items: end; }
.pick select, .pick .chev { grid-area: 1 / 1; }
.pick .chev { margin-right: 8px; pointer-events: none; }
.pick select {
  appearance: none;
  width: 100%;
  height: 48px;
  padding-left: 10px;
  font-size: 24px;
  background: #fff;
  border: 2px solid #cdcdcd;
  border-radius: 6px;
}
.face { width: 282px; }
.size { width: 108px; }
.fmt { width: 310px; }
.grow { margin: 0 16px 0 8px; }
.letter { width: 32px; font-size: 26px; font-family: "Open Sans", sans-serif; color: #333; margin-right: 20px; }
.bold { font-weight: 700; }
.ital { font-family: "Liberation Serif", serif; font-style: italic; font-size: 30px; }
.under { text-decoration: underline; text-underline-offset: 5px; margin-right: 0; }
.ink { margin-left: 4px; }
.g-align { width: 268px; padding-left: 20px; }
.line button { width: 44px; height: 40px; margin-right: 4px; border-radius: 6px; }
.line .more { width: 40px; margin: 0 0 0 -12px; }
.line .on { background: #c4c4c4; }
.ln { width: 28px; height: 32px; fill: none; stroke: #3a3a3a; stroke-width: 2; }
.ln .blue { stroke: #2a8dd2; }
.sep.tight { margin: 0 16px 0 12px; }
.line .slant { width: 36px; margin: 0 8px 0 4px; }
.line .slim { width: 20px; margin: 0; }
.sep.last { margin: 0 0 0 18px; }
.g-num { width: 350px; padding-left: 20px; }
.sym { width: 46px; font: 34px "Open Sans", sans-serif; color: #3a3a3a; }
.g-num .more { width: 28px; }
.pct { margin-left: 2px; width: 48px; }
.com { width: 20px; margin-left: 18px; }
.g-num .mini { margin: 0 24px 0 29px; }
.dec { margin-left: 18px; }
.item { height: 44px; gap: 12px; font-size: 21px; }
.item .chev { margin-left: 4px; }
.g-style, .g-cells { align-items: flex-start; padding-left: 26px; }
.g-style { width: 352px; }
.g-cells { width: 192px; padding-left: 24px; }
.cell { width: 32px; height: 32px; }
.cell .g { stroke: #777; stroke-width: 2; fill: #fafafa; }
.cell .k { stroke: #3a3a3a; stroke-width: 2; fill: none; }
.g-edit { width: 308px; padding-left: 25px; }
.g-edit .tall { margin-left: 6px; }
.g-edit .tall + .tall { margin-left: 2px; }
.g-add { width: 126px; justify-content: center; padding-right: 2px; }
.g-data { width: 128px; justify-content: center; }

/* Formula bar */
.formula {
  display: flex;
  align-items: center;
  height: 58px;
  padding-bottom: 6px;
  background: linear-gradient(#8f8f8f 1px, #e2e2e2 1px 4px, #8f8f8f 4px 5px, #fff 5px) left bottom / 100% 6px no-repeat, #fff;
}
.namebox {
  display: flex;
  align-items: center;
  width: 171px;
  height: 52px;
  border: 2px solid #ababab;
  border-bottom: 0;
  padding: 0 2px 0 19px;
  font-size: 24px;
  color: #000;
}
.namebox input { flex: 1; height: 40px; margin-bottom: 4px; }
.formula > button { margin-left: 28px; }
.formula > .fx { font: italic 34px/40px "Liberation Serif", serif; color: #444; margin-left: 34px; }
.formula .sep { height: 32px; margin-left: 18px; background: #dedede; }
.entry { flex: 1; margin-left: 14px; height: 36px; background: #fcfcfc; }
.formula .expand { margin: 0 16px 0 8px; }

/* Grid */
.sheet { flex: 1; min-height: 0; position: relative; overflow: hidden; }
table { border-collapse: separate; border-spacing: 0; table-layout: fixed; width: 2622px; }
.c-head { width: 68px; }
.c-std { width: 196px; }
.c-wide { width: 202px; }
th, td { padding: 2px 6px 0; height: 48px; border: solid #d2d2d2; border-width: 0 2px 2px 0; white-space: nowrap; position: relative; }
td { font: 32px/44px Lato, Carlito, sans-serif; color: #000; }
th { font-size: 31px; line-height: 44px; font-weight: 400; color: #5f5f5f; padding: 2px 0 0; }
thead th {
  height: 66px;
  border-bottom-color: #b6b6b6;
  border-right-color: #dedede;
  background: linear-gradient(#fefefe, #f5f5f5);
}
tbody th { border-right-color: #b6b6b6; border-bottom-color: #dcdcdc; background: linear-gradient(90deg, #fefefe, #f5f5f5); }
th.corner { border-right-color: #b6b6b6; }
.corner svg { margin: 0 0 0 10px; }
th.on { background: #f1f1f1; color: #227447; }
th.on::after { content: ""; position: absolute; right: -2px; bottom: -2px; z-index: 1; background: #227447; }
thead th.on::after { left: -2px; height: 4px; }
tbody th.on::after { top: -2px; width: 4px; }
.b { font-weight: 700; font-size: 33px; }
.r { text-align: right; }
.m { text-align: center; font-size: 34px; }
.neg { color: #fc0d1b; }
.cursor { position: absolute; inset: -4px; border: 4px solid #227447; z-index: 1; }
.cursor::after {
  content: "";
  position: absolute;
  right: -8px;
  bottom: -8px;
  width: 14px;
  height: 14px;
  border: 2px solid #fff;
  background: #227447;
}
.scrollbar {
  position: absolute;
  left: 72px;
  right: 97px;
  bottom: 6px;
  height: 14px;
  border-radius: 7px;
  background: rgba(128, 128, 128, .74);
}

/* Sheet tabs */
footer { flex: none; }
.sheets {
  display: flex;
  height: 52px;
  padding-left: 30px;
  background: linear-gradient(#e6e6e6, #efefef 8px);
  border-top: 2px solid #cacaca;
}
.nav { height: 50px; margin-right: 31px; fill: #b3b3b3; }
.sheet-tab {
  width: 159px;
  height: 42px;
  padding-top: 2px;
  font-size: 24px;
  font-weight: 500;
  color: #606060;
  border-right: 2px solid #cacaca;
}
.sheet-tab.on {
  height: 45px;
  margin-top: -2px;
  padding-top: 5px;
  background: #fff;
  color: #2f8a58;
  font-size: 23px;
  font-weight: 700;
  border: 2px solid #c4c4c4;
  border-top: 0;
  border-radius: 0 0 6px 6px;
  box-shadow: 0 1px 2px #0003;
}
.plus { width: 77px; height: 42px; padding-top: 2px; border-right: 2px solid #cacaca; }

/* Status bar */
.status {
  display: flex;
  align-items: center;
  height: 46px;
  padding: 0 48px 0 48px;
  border-top: 2px solid #9e9e9e;
  background: linear-gradient(#e4e4e4, #d5d5d5);
  font-size: 24px;
  color: #505050;
}
.access { margin-left: 40px; gap: 4px; }
.views { margin-left: auto; display: flex; align-items: center; height: 44px; }
.views button { width: 71px; height: 44px; }
.views .on { width: 74px; background: #a5a5a5; }
.views .step { width: 44px; }
.views input {
  appearance: none;
  width: 200px;
  height: 32px;
  margin: 0;
}
.views input::-webkit-slider-runnable-track { height: 8px; border-radius: 4px; background: #9b9b9b; }
.views input::-webkit-slider-thumb {
  appearance: none;
  width: 32px;
  height: 32px;
  margin-top: -12px;
  border-radius: 50%;
  background: #fff;
  box-shadow: 0 1px 3px #0007;
}
.pctg { width: 84px; text-align: right; }

/* Add-ins popover */
.popover {
  position: absolute;
  top: 311px;
  right: 25px;
  width: 707px;
  padding: 20px 50px 24px 36px;
  background: #ebebeb;
  border: 1px solid #bdbdbd;
  border-radius: 24px;
  box-shadow: 0 16px 40px rgba(0, 0, 0, .28), 0 0 20px rgba(0, 0, 0, .1);
  z-index: 2;
}
.arrow { position: absolute; top: -25px; right: 212px; }
.ring { margin-right: -14px; padding: 5px; background: #7dab8e; border-radius: 6px; }
.addsearch {
  display: flex;
  align-items: center;
  gap: 14px;
  height: 52px;
  padding-left: 11px;
  border: 2px solid #5f8d6e;
  border-radius: 12px;
  background: #dfdfdf;
  color: #222;
}
.addsearch input { flex: 1; font-size: 27px; margin-bottom: 4px; }
.addsearch input::placeholder { color: #a8a8a8; opacity: 1; }
h2 { margin: 32px 0 0 8px; font-size: 30px; line-height: 40px; color: #3a3a3a; }
.popover ul { margin: 30px 0 40px 2px; height: 630px; overflow: hidden; border-bottom: 2px solid #d4d4d4; }
.popover li { height: 140px; display: flex; align-items: center; padding: 0 12px 0 14px; }
.logo { padding: 10px; border: 2px solid #b0b0b0; border-radius: 9px; }
.info { flex: 1; min-width: 0; margin: 0 0 4px 21px; font-size: 24px; line-height: 35px; white-space: nowrap; color: #3a3a3a; }
.info h3 { font-size: 26px; line-height: 35px; font-weight: 700; }
.info a { color: #0f5fd0; }
.popover li button { flex: none; width: 86px; height: 46px; border: 2px solid #c4c4c4; border-radius: 7px; background: #fff; color: #000; font-size: 23px; }
.more-add {
  width: 242px;
  height: 64px;
  margin-left: auto;
  gap: 10px;
  background: #fff;
  color: #000;
  border: 2px solid #7c7c7c;
  border-radius: 8px;
  font-size: 24px;
}
```
FILE: sheet.js
```js
// Cell contents: text, classes, columns spanned.
const data = {
  A1: ["Apartment Loan", "b m", 2], D1: ["Loan Period", "b m", 2],
  A2: ["PV", "b"], B2: ["$100,000.00", "r"], D2: ["Nper", "b"], E2: ["240", "r"],
  A3: ["Rate", "b"], B3: ["0.50%", "r"],
  A4: ["Nper", "b"], B4: ["240", "r"],
  A5: ["FV", "b"], B5: ["0", "r"],
  A6: ["PMT", "b"], B6: ["($716.43)", "r neg"],
};
const letters = "ABCDEFGHIJKLM".split("");
const active = { col: "E", row: 4 };

document.getElementById("cols").innerHTML =
  '<col class="c-head">' + letters.map(l => `<col class="${l === "B" ? "c-wide" : "c-std"}">`).join("");

document.getElementById("letters").innerHTML =
  '<th class="corner"><svg width="52" height="52" viewBox="0 0 52 52"><path d="M52 0v52H0z" fill="#dedede"/></svg></th>' +
  letters.map(l => `<th class="${l === active.col ? "on" : ""}">${l}</th>`).join("");

let html = "";
for (let row = 1; row <= 24; row++) {
  html += `<tr><th class="${row === active.row ? "on" : ""}">${row}</th>`;
  for (let i = 0; i < letters.length; i++) {
    const [text = "", cls = "", span = 1] = data[letters[i] + row] || [];
    const here = letters[i] === active.col && row === active.row;
    html += `<td class="${cls}" colspan="${span}">${here ? '<span class="cursor"></span>' : text}</td>`;
    i += span - 1;
  }
  html += "</tr>";
}
document.getElementById("cells").innerHTML = html;
```
